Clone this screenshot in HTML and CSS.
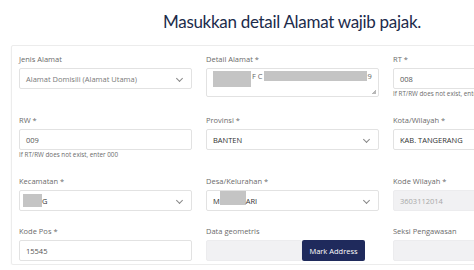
FILE: index.html
```html
<!DOCTYPE html>
<html lang="id">
<head>
    <meta charset="UTF-8">
    <title>Detail Alamat</title>
    <link rel="stylesheet" href="styles.css">
</head>
<body>
    <header class="page-head">
        <h1>Masukkan detail Alamat wajib pajak.</h1>
    </header>
    <section class="card">
        <div class="grid">
            <div class="field">
                <label>Jenis Alamat</label>
                <div class="input select muted">Alamat Domisili (Alamat Utama)<span class="chev"></span></div>
            </div>
            <div class="field">
                <label>Detail Alamat *</label>
                <div class="input textarea">
                    <span class="redact r1"></span><span class="txt">F C</span><span class="redact r2"></span><span class="txt">9</span>
                    <span class="grip"></span>
                </div>
            </div>
            <div class="field">
                <label>RT *</label>
                <div class="input">008</div>
                <p class="help">If RT/RW does not exist, enter 000</p>
            </div>

            <div class="field">
                <label>RW *</label>
                <div class="input">009</div>
                <p class="help">If RT/RW does not exist, enter 000</p>
            </div>
            <div class="field">
                <label>Provinsi *</label>
                <div class="input select dark">BANTEN<span class="chev"></span></div>
            </div>
            <div class="field">
                <label>Kota/Wilayah *</label>
                <div class="input select dark">KAB. TANGERANG<span class="chev"></span></div>
            </div>

            <div class="field">
                <label>Kecamatan *</label>
                <div class="input select dark"><span class="redact r3"></span>G<span class="chev"></span></div>
            </div>
            <div class="field">
                <label>Desa/Kelurahan *</label>
                <div class="input select dark">M<span class="redact r4"></span>ARI<span class="chev"></span></div>
            </div>
            <div class="field">
                <label>Kode Wilayah *</label>
                <div class="input disabled">3603112014</div>
            </div>

            <div class="field last">
                <label>Kode Pos *</label>
                <div class="input">15545</div>
            </div>
            <div class="field last">
                <label>Data geometris</label>
                <div class="geo">
                    <div class="input disabled geo-input"></div>
                    <button class="mark">Mark Address</button>
                </div>
            </div>
            <div class="field last">
                <label>Seksi Pengawasan</label>
                <div class="input disabled"></div>
            </div>
        </div>
    </section>
</body>
</html>
```

FILE: styles.css
```css
/* General */
html, body {
    margin: 0;
    padding: 0;
    background: #fff;
    font-family: 'Open Sans', sans-serif;
    overflow: hidden;
}

/* Title */
.page-head {
    height: 45px;
    display: flex;
    align-items: center;
    padding-left: 163px;
    box-sizing: border-box;
}

.page-head h1 {
    margin: 0 0 2px;
    font-family: 'Lato', 'Open Sans', sans-serif;
    font-size: 17px;
    font-weight: 400;
    letter-spacing: -0.3px;
    color: #1c2b4b;
    white-space: nowrap;
}

/* Card */
.card {
    margin-left: 11px;
    width: 620px;
    border: 1px solid #ececec;
    border-radius: 2px;
    box-shadow: 0 1px 2px rgba(0, 0, 0, 0.05);
    padding: 8px 0 3px 7px;
}

.grid {
    display: grid;
    grid-template-columns: 173px 173px 173px;
    column-gap: 14px;
    row-gap: 17px;
    align-items: start;
}

.field.last {
    margin-top: -2px;
}

.field label {
    display: block;
    font-size: 7.5px;
    line-height: 10px;
    color: #6b6b6b;
    margin-bottom: 4px;
}

.input {
    position: relative;
    height: 21px;
    box-sizing: border-box;
    border: 1px solid #e2e2e2;
    border-radius: 2px;
    background: #fff;
    padding: 0 6px;
    display: flex;
    align-items: center;
    font-size: 7.5px;
    color: #555;
    white-space: nowrap;
}

.input.dark {
    color: #333;
}

.input.muted {
    color: #7a7a7a;
}

.input.disabled {
    background: #f1f1f3;
    border-color: #ececee;
    color: #a8a8a8;
}

.input.textarea {
    height: 29px;
    align-items: flex-start;
    padding-top: 2px;
    color: #666;
}

.chev {
    position: absolute;
    right: 9px;
    top: 7px;
    width: 4px;
    height: 4px;
    border-right: 1px solid #888;
    border-bottom: 1px solid #888;
    transform: rotate(45deg);
}

.grip {
    position: absolute;
    right: 2px;
    bottom: 2px;
    width: 4px;
    height: 4px;
    background: linear-gradient(135deg, transparent 50%, #b8b8b8 50%);
}

.redact {
    display: inline-block;
    flex: none;
    background: #c4c4c4;
}

.r1 { width: 38px; height: 16px; }
.r2 { width: 103px; height: 10px; margin-left: 1px; }
.r3 { width: 19px; height: 13px; margin-left: -3px; }
.r4 { width: 26px; height: 14px; margin-top: -6px; }

.textarea .txt {
    line-height: 10px;
    margin-left: 1px;
}

.help {
    margin: 0;
    font-size: 6.3px;
    line-height: 9px;
    color: #6b6b6b;
    white-space: nowrap;
}

/* Geometry + button */
.geo {
    display: flex;
    align-items: center;
}

.geo-input {
    width: 96px;
}

.mark {
    height: 21px;
    width: 63px;
    border: none;
    border-radius: 2px;
    background: #1f2a5c;
    color: #fff;
    font-family: 'Open Sans', sans-serif;
    font-size: 7.5px;
    padding: 0;
    cursor: pointer;
}
```
